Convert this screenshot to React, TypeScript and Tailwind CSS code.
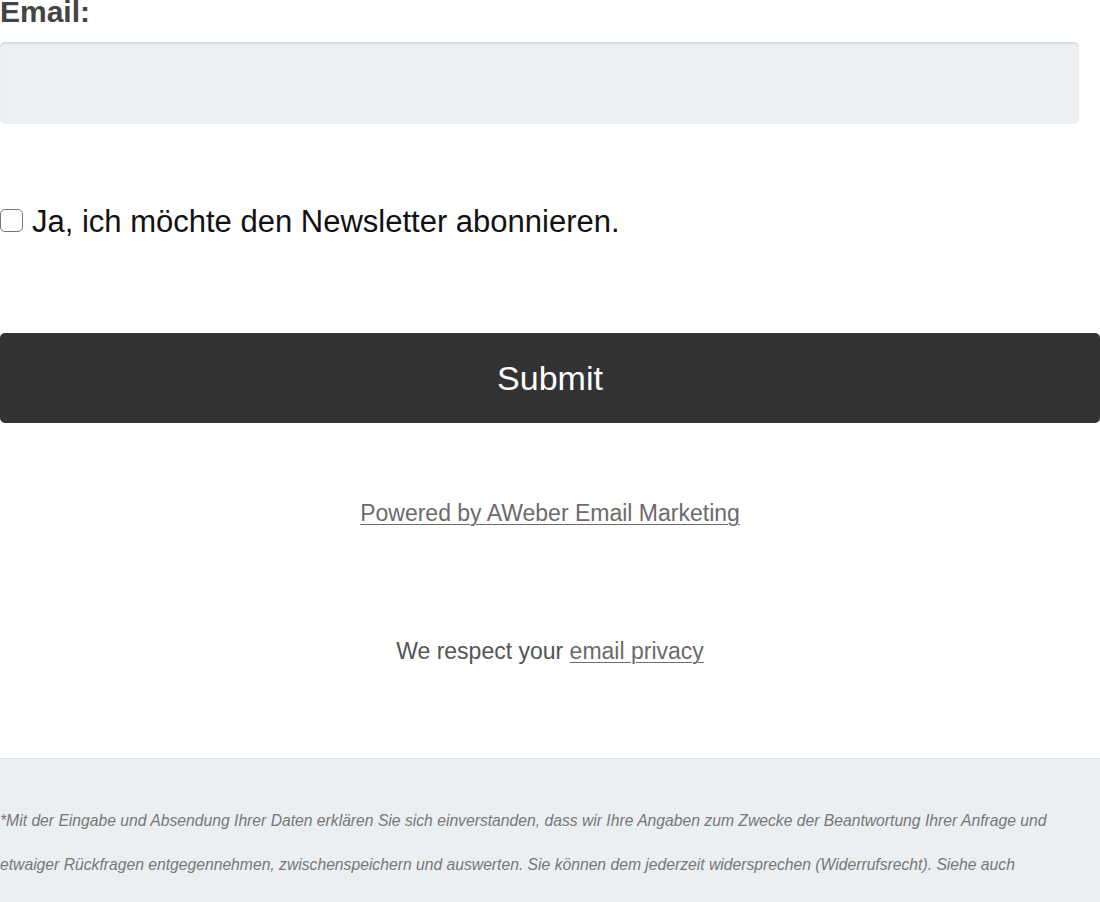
import React from "react";

export default function App() {
  return (
    <div className="w-[1100px] h-[902px] overflow-hidden bg-white" style={{ fontFamily: '"Liberation Sans", Arial, sans-serif' }}>
      <label className="block text-[30px] leading-[24px] font-bold text-[#444]">Email:</label>
      <div className="mt-[18px] w-[1079px] h-[82px] rounded-[5px] bg-[#edf0f2] shadow-[inset_0_2px_1px_rgba(0,0,0,0.08)]" />
      <div className="mt-[82px] flex items-center">
        <span className="w-[23px] h-[23px] rounded-[5px] border-[1.5px] border-[#767676] bg-white shrink-0 mt-[-2px]" />
        <span className="ml-[9px] text-[31px] leading-[31px] text-[#111]">Ja, ich möchte den Newsletter abonnieren.</span>
      </div>
      <div className="mt-[96px] h-[90px] rounded-[5px] bg-[#333333] flex items-center justify-center text-white text-[34px] leading-none">
        Submit
      </div>
      <div className="mt-[79px] text-center text-[23px] leading-[23px]">
        <span className="text-[#6b6b6b] underline underline-offset-[3px] decoration-[1px]">Powered by AWeber Email Marketing</span>
      </div>
      <div className="mt-[115px] text-center text-[23px] leading-[23px] text-[#555]">
        We respect your <span className="text-[#6b6b6b] underline underline-offset-[3px] decoration-[1px]">email privacy</span>
      </div>
      <div className="mt-[95px] border-t border-[#e2e5e8] bg-[#eceff1] pt-[40px] h-[200px]">
        <p className="italic text-[15.7px] leading-[44px] text-[#777]">
          *Mit der Eingabe und Absendung Ihrer Daten erklären Sie sich einverstanden, dass wir Ihre Angaben zum Zwecke der Beantwortung Ihrer Anfrage und etwaiger Rückfragen entgegennehmen, zwischenspeichern und auswerten. Sie können dem jederzeit widersprechen (Widerrufsrecht). Siehe auch
        </p>
      </div>
    </div>
  );
}
